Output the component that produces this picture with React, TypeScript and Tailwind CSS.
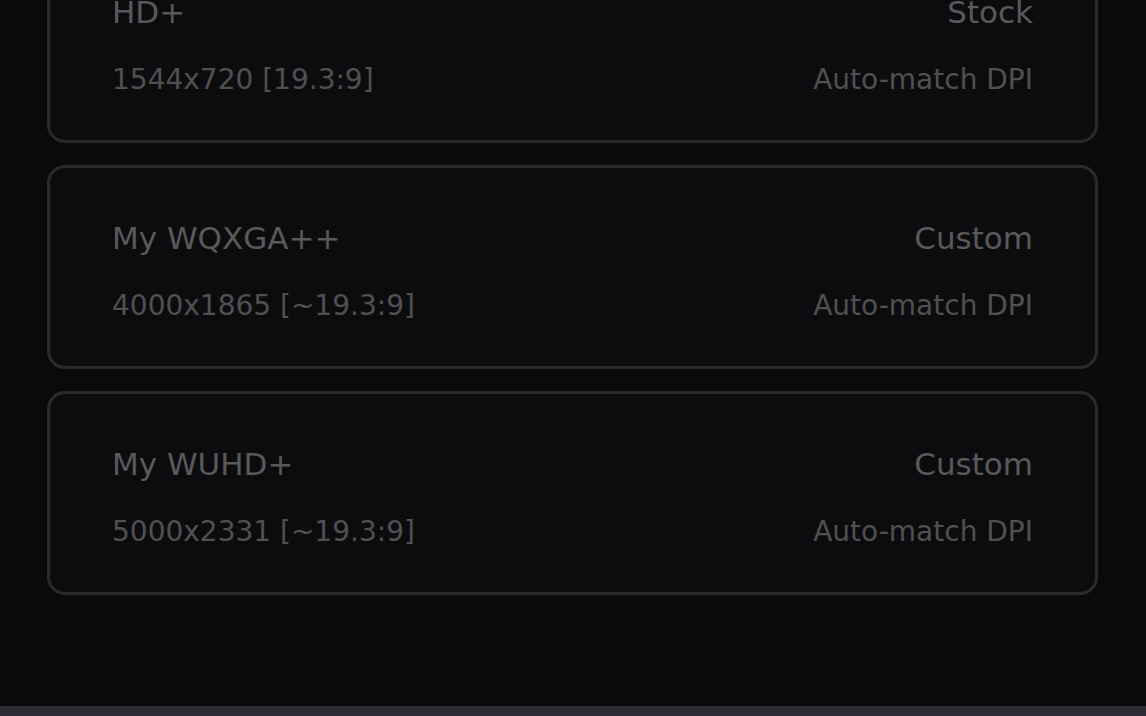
import React from 'react';

type Resolution = {
  name: string;
  size: string;
  kind: string;
  dpi: string;
};

const resolutions: Resolution[] = [
  { name: 'HD+', size: '1544x720 [19.3:9]', kind: 'Stock', dpi: 'Auto-match DPI' },
  { name: 'My WQXGA++', size: '4000x1865 [~19.3:9]', kind: 'Custom', dpi: 'Auto-match DPI' },
  { name: 'My WUHD+', size: '5000x2331 [~19.3:9]', kind: 'Custom', dpi: 'Auto-match DPI' },
];

const ResolutionCard: React.FC<{ item: Resolution }> = ({ item }) => (
  <div className="h-[204px] rounded-[18px] border-[3px] border-[#2a2a2c] bg-[#0c0c0e] pl-[62px] pr-[62px] pt-[45px]">
    <div className="flex items-center justify-between h-[50px] text-[31px] text-[#59595b]">
      <span>{item.name}</span>
      <span>{item.kind}</span>
    </div>
    <div className="flex items-center justify-between h-[50px] mt-[18px] text-[28px] text-[#505052]">
      <span>{item.size}</span>
      <span>{item.dpi}</span>
    </div>
  </div>
);

export default function App() {
  return (
    <div
      className="w-[1146px] h-[716px] overflow-hidden bg-[#0a0a0c] flex flex-col"
      style={{ fontFamily: '"DejaVu Sans", Roboto, sans-serif' }}
    >
      <div className="flex-1 overflow-hidden">
        <div className="-mt-[61px] pl-[47px] pr-[48px] flex flex-col gap-[22px]">
          {resolutions.map((r) => (
            <ResolutionCard key={r.name} item={r} />
          ))}
        </div>
      </div>
      {/* nav bar strip */}
      <div className="h-[10px] bg-[#2d2b33]" />
    </div>
  );
}
